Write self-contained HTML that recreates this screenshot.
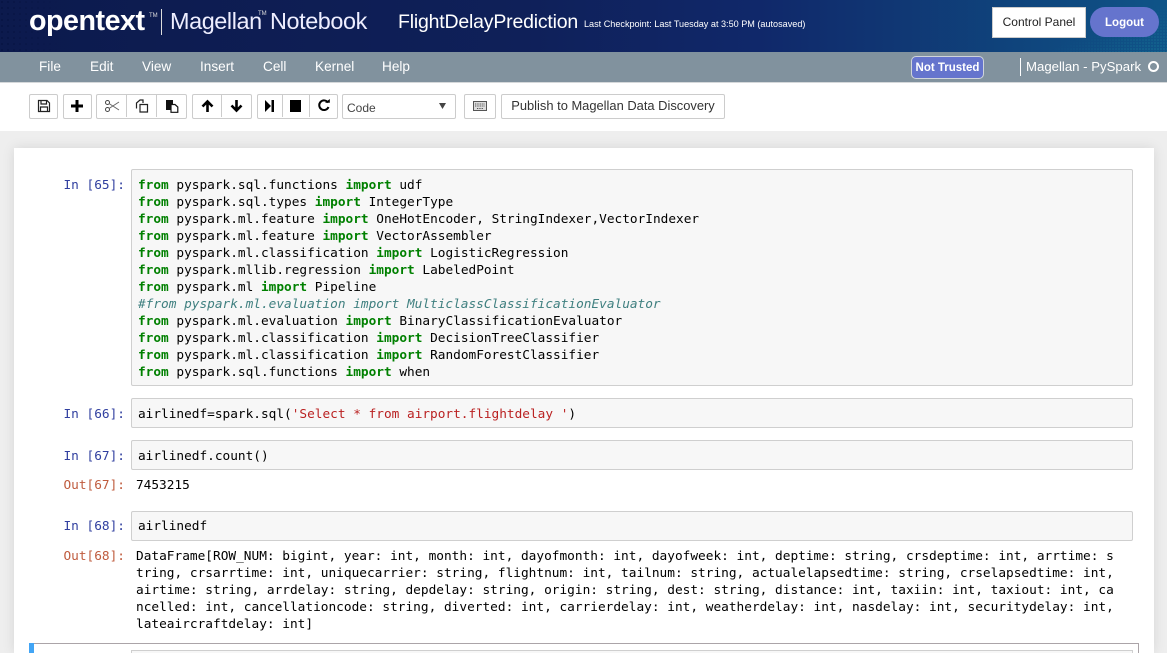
<!DOCTYPE html>
<html><head><meta charset="utf-8"><style>
html,body{margin:0;padding:0;width:1167px;height:653px;overflow:hidden;background:#eee;font-family:"Liberation Sans",sans-serif}
#root{position:absolute;left:0;top:0;width:1167px;height:653px;overflow:hidden}
.a{position:absolute;white-space:nowrap}
#hd{left:0;top:0;width:1167px;height:52px;background:linear-gradient(90deg,#0c1a4d 0%,#0f2059 45%,#10286a 65%,#0f4a80 92%,#0f5488 100%)}
#mn{left:0;top:52px;width:1167px;height:30px;background:#81929e;border-bottom:1px solid #d5d8da}
#tb{left:0;top:83px;width:1167px;height:48px;background:#fff}
.m{top:59px;font-size:13.6px;color:#fff;line-height:15px}
.b{position:absolute;top:94px;height:22px;background:#fff;border:1px solid #ccc;border-radius:2px;box-sizing:content-box}
.s{position:absolute;top:95px;width:1px;height:22px;background:#ccc}
svg{position:absolute;overflow:visible}
#card{left:14px;top:148px;width:1140px;height:505px;background:#fff;box-shadow:0 0 12px rgba(0,0,0,.1)}
.c{position:absolute;left:131px;width:1000px;background:#f7f7f7;border:1px solid #cfcfcf;border-radius:2px}
pre{position:absolute;margin:0;font-family:"DejaVu Sans Mono",monospace;font-size:12.78px;line-height:17px;color:#000}
.k{color:#008000;font-weight:bold}
.p{position:absolute;width:125px;text-align:right;left:0;font-family:"DejaVu Sans Mono",monospace;font-size:12.78px;line-height:17px;color:#303f9f}
.q{color:#bf5b3d}
.st{color:#ba2121}
.cm{color:#408080;font-style:italic}
</style></head><body><div id="root">
<div id="hd" class="a"></div>
<svg style="left:0;top:0" width="130" height="52"><defs><pattern id="d" width="6" height="6" patternUnits="userSpaceOnUse"><circle cx="2" cy="2" r=".6" fill="#000830"/></pattern><linearGradient id="fa" x1="0" x2="1"><stop offset="0" stop-color="#fff"/><stop offset="1" stop-color="#000"/></linearGradient><mask id="mk"><rect width="60" height="52" fill="url(#fa)"/></mask></defs><rect width="60" height="52" fill="url(#d)" mask="url(#mk)"/></svg>
<svg style="left:1040px;top:0" width="127" height="52"><defs><pattern id="e" width="3" height="3" patternUnits="userSpaceOnUse"><circle cx="1" cy="1" r=".6" fill="#1d8aa0"/></pattern><linearGradient id="fb" x1="0" x2="1" y1="0" y2="1"><stop offset=".5" stop-color="#000"/><stop offset="1" stop-color="#fff"/></linearGradient><mask id="mb"><rect width="127" height="52" fill="url(#fb)"/></mask></defs><rect width="127" height="52" fill="url(#e)" mask="url(#mb)"/></svg>
<div class="a" style="left:29px;top:5px;font-size:28.7px;font-weight:bold;color:#fff;line-height:32px;letter-spacing:-.5px">opentext</div>
<div class="a" style="left:149px;top:12px;font-size:6px;color:#ddd;line-height:8px">TM</div>
<div class="a" style="left:161px;top:9px;width:1px;height:26px;background:#ddd"></div>
<div class="a" style="left:170px;top:8px;font-size:23.4px;color:#eef;line-height:26px;letter-spacing:-.4px">Magellan</div>
<div class="a" style="left:258px;top:11px;font-size:6px;color:#ddd;line-height:7px">TM</div>
<div class="a" style="left:270px;top:8px;font-size:23.4px;color:#eef;line-height:26px;letter-spacing:-.4px">Notebook</div>
<div class="a" style="left:398px;top:10px;font-size:19.5px;color:#fff;line-height:24px;letter-spacing:-.2px">FlightDelayPrediction</div>
<div class="a" style="left:584px;top:17px;font-size:9.1px;color:#fff;line-height:14px">Last Checkpoint: Last Tuesday at 3:50 PM (autosaved)</div>
<div class="a" style="left:992px;top:7px;width:92px;height:29px;background:#fff;border:1px solid #ccc;text-align:center;font-size:12px;line-height:29px;color:#222">Control Panel</div>
<div class="a" style="left:1090px;top:7px;width:69px;height:30px;background:#6574cd;border-radius:15px;text-align:center;font-size:11.5px;line-height:32px;color:#fff;font-weight:bold">Logout</div>

<div id="mn" class="a"></div>
<div class="a m" style="left:39px">File</div>
<div class="a m" style="left:90px">Edit</div>
<div class="a m" style="left:142px">View</div>
<div class="a m" style="left:200px">Insert</div>
<div class="a m" style="left:263px">Cell</div>
<div class="a m" style="left:315px">Kernel</div>
<div class="a m" style="left:382px">Help</div>
<div class="a" style="left:911px;top:56px;width:71px;height:21px;background:#6574cd;border:1px solid #cfd4da;border-radius:5px;text-align:center;color:#fff;font-size:11.5px;line-height:23px;font-weight:bold">Not Trusted</div>
<div class="a" style="left:1020px;top:58px;width:1px;height:18px;background:#fff"></div>
<div class="a" style="left:1026px;top:59px;color:#fff;font-size:13.2px;line-height:15px">Magellan - PySpark</div>
<div class="a" style="left:1148px;top:61px;width:7px;height:7px;border:2px solid #fff;border-radius:50%"></div>

<div id="tb" class="a"></div>
<div class="b" style="left:29px;width:27px;height:23px"></div>
<svg style="left:38px;top:100px" width="12" height="12" viewBox="0 0 12 12"><path d="M.5.5H9L11.5 3V11.500H.5Z M3 .5V4H8.500V.5 M2.500 11.500V7H9.500V11.500" fill="none" stroke="#222" stroke-width="1.200"/></svg>
<div class="b" style="left:63px;width:27px;height:23px"></div>
<svg style="left:71px;top:100px" width="12" height="12"><path d="M6 0V12M0 6H12" stroke="#000" stroke-width="3"/></svg>
<div class="b" style="left:96px;width:89px;height:23px"></div><div class="s" style="left:126px"></div><div class="s" style="left:156px"></div>
<svg style="left:105px;top:100px" width="14" height="12" viewBox="0 0 14 12"><circle cx="2.500" cy="2.500" r="2" fill="none" stroke="#444"/><circle cx="2.500" cy="9.500" r="2" fill="none" stroke="#444"/><path d="M4 3.500L14 10M4 8.500L14 2" stroke="#666" fill="none"/></svg>
<svg style="left:135px;top:99px" width="14" height="14" viewBox="0 0 14 14"><path d="M1.500 9.500V4L5 1H8V4M5 5.500H12.500V13H5Z" fill="#fff" stroke="#222" stroke-width="1.200"/></svg>
<svg style="left:165px;top:99px" width="14" height="14" viewBox="0 0 14 14"><path d="M1 1H8V11H1Z" fill="#111"/><path d="M6 5.500H10L12.800 8V13.300H6Z" fill="#fff" stroke="#111" stroke-width="1.200"/></svg>
<div class="b" style="left:192px;width:58px;height:23px"></div><div class="s" style="left:221px"></div>
<svg style="left:201px;top:100px" width="13" height="12" viewBox="0 0 13 12"><path d="M6.500 12V2M1.500 6.500L6.500 1.500L11.500 6.500" fill="none" stroke="#000" stroke-width="2.600"/></svg>
<svg style="left:230px;top:100px" width="13" height="12" viewBox="0 0 13 12"><path d="M6.500 0V10M1.500 5.500L6.500 10.500L11.500 5.500" fill="none" stroke="#000" stroke-width="2.600"/></svg>
<div class="b" style="left:257px;width:79px;height:23px"></div><div class="s" style="left:282px"></div><div class="s" style="left:309px"></div>
<svg style="left:265px;top:100px" width="10" height="12" viewBox="0 0 10 12"><path d="M0 0L6 6L0 12Z" fill="#000"/><rect x="6.500" y="0" width="2.500" height="12" fill="#000"/></svg>
<div class="a" style="left:290px;top:100px;width:11px;height:12px;background:#000"></div>
<svg style="left:318px;top:99px" width="12" height="13" viewBox="0 0 12 13"><path d="M10 3.500A4.800 4.800 0 1 0 10.500 8" fill="none" stroke="#000" stroke-width="2"/><path d="M7 3.800H11.800V0Z" fill="#000"/></svg>
<div class="b" style="left:342px;width:112px;height:23px"></div>
<div class="a" style="left:347px;top:101px;font-size:12px;line-height:14px;color:#444">Code</div>
<svg style="left:439px;top:103px" width="7" height="6"><path d="M0 0H7L3.500 6Z" fill="#444"/></svg>
<div class="b" style="left:464px;width:30px;height:23px"></div>
<svg style="left:473px;top:101px" width="14" height="10" viewBox="0 0 14 10"><rect x=".5" y=".5" width="13" height="9" fill="#ddd" stroke="#555"/><path d="M2 3H12M2 5H12M4 7.500H10" stroke="#555" stroke-dasharray="1 .7"/></svg>
<div class="b" style="left:501px;width:222px;height:23px;text-align:center;font-size:12.9px;line-height:22px;color:#333">Publish to Magellan Data Discovery</div>

<div id="card" class="a"></div>

<div class="p" style="top:177px">In [65]:</div>
<div class="c" style="top:169px;height:215px"></div>
<pre style="left:138px;top:177px"><span class="k">from</span> pyspark.sql.functions <span class="k">import</span> udf
<span class="k">from</span> pyspark.sql.types <span class="k">import</span> IntegerType
<span class="k">from</span> pyspark.ml.feature <span class="k">import</span> OneHotEncoder, StringIndexer,VectorIndexer
<span class="k">from</span> pyspark.ml.feature <span class="k">import</span> VectorAssembler
<span class="k">from</span> pyspark.ml.classification <span class="k">import</span> LogisticRegression
<span class="k">from</span> pyspark.mllib.regression <span class="k">import</span> LabeledPoint
<span class="k">from</span> pyspark.ml <span class="k">import</span> Pipeline
<span class="cm">#from pyspark.ml.evaluation import MulticlassClassificationEvaluator</span>
<span class="k">from</span> pyspark.ml.evaluation <span class="k">import</span> BinaryClassificationEvaluator
<span class="k">from</span> pyspark.ml.classification <span class="k">import</span> DecisionTreeClassifier
<span class="k">from</span> pyspark.ml.classification <span class="k">import</span> RandomForestClassifier
<span class="k">from</span> pyspark.sql.functions <span class="k">import</span> when</pre>

<div class="p" style="top:406px">In [66]:</div>
<div class="c" style="top:398px;height:28px"></div>
<pre style="left:138px;top:406px">airlinedf=spark.sql(<span class="st">'Select * from airport.flightdelay '</span>)</pre>

<div class="p" style="top:448px">In [67]:</div>
<div class="c" style="top:440px;height:28px"></div>
<pre style="left:138px;top:448px">airlinedf.count()</pre>
<div class="p q" style="top:477px">Out[67]:</div>
<pre style="left:136px;top:477px">7453215</pre>

<div class="p" style="top:518px">In [68]:</div>
<div class="c" style="top:511px;height:28px"></div>
<pre style="left:138px;top:518px">airlinedf</pre>
<div class="p q" style="top:548px">Out[68]:</div>
<pre style="left:136px;top:548px;font-size:12.8px;letter-spacing:-.005px">DataFrame[ROW_NUM: bigint, year: int, month: int, dayofmonth: int, dayofweek: int, deptime: string, crsdeptime: int, arrtime: s
tring, crsarrtime: int, uniquecarrier: string, flightnum: int, tailnum: string, actualelapsedtime: string, crselapsedtime: int,
airtime: string, arrdelay: string, depdelay: string, origin: string, dest: string, distance: int, taxiin: int, taxiout: int, ca
ncelled: int, cancellationcode: string, diverted: int, carrierdelay: int, weatherdelay: int, nasdelay: int, securitydelay: int,
lateaircraftdelay: int]</pre>

<div class="a" style="left:29px;top:643px;width:1110px;height:14px;border:1px solid #aba4a8;box-sizing:border-box"></div>
<div class="a" style="left:29px;top:643px;width:5px;height:10px;background:#42a5f5"></div>
<div class="a" style="left:131px;top:650px;width:1000px;height:6px;background:#f7f7f7;border:1px solid #cfcfcf"></div>
</div></body></html>
